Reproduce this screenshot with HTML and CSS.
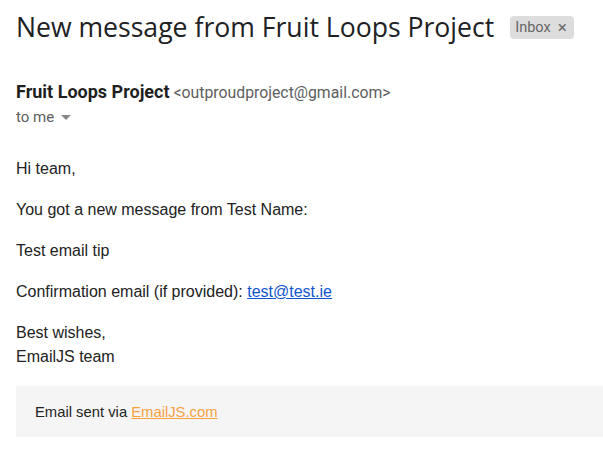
FILE: index.html
```html
<!DOCTYPE html>
<html>
<head>
<meta charset="utf-8">
<link rel="stylesheet" href="styles.css">
</head>
<body>
<div class="page">
  <div class="subject-row">
    <h1 class="subject">New message from Fruit Loops Project</h1>
    <span class="label">Inbox <span class="label-x">×</span></span>
  </div>
  <div class="sender">
    <div class="from"><span class="name">Fruit Loops Project</span> <span class="addr">&lt;outproudproject@gmail.com&gt;</span></div>
    <div class="to">to me <span class="caret"></span></div>
  </div>
  <div class="body">
    <p>Hi team,</p>
    <p>You got a new message from Test Name:</p>
    <p>Test email tip</p>
    <p>Confirmation email (if provided): <a class="mail" href="#">test@test.ie</a></p>
    <p>Best wishes,<br>EmailJS team</p>
  </div>
  <div class="footer">Email sent via <a class="ejs" href="#">EmailJS.com</a></div>
</div>
</body>
</html>
```
FILE: styles.css
```css
html, body { margin: 0; padding: 0; background: #fff; }
.page { padding: 0 0 0 16px; }
.subject-row { display: flex; align-items: center; padding-top: 9px; height: 36px; }
.subject { margin: 0; font-family: "Open Sans", sans-serif; font-weight: 400; font-size: 26.6px; color: #202124; line-height: 36px; }
.label { margin-left: 16px; background: #dddddd; color: #666; font-family: Roboto, sans-serif; font-size: 14.5px; border-radius: 4px; padding: 0 7px 0 5px; height: 23px; display: inline-flex; align-items: center; gap: 7px; }
.label-x { font-size: 17px; color: #6a6a6a; }
.sender { margin-top: 36px; font-family: Roboto, sans-serif; }
.from { font-size: 15.8px; line-height: 22px; display: flex; align-items: baseline; gap: 4px; }
.name { font-weight: 700; color: #1f1f1f; font-size: 18px; }
.addr { font-size: 15.8px; color: #5e5e5e; }
.to { font-size: 15px; color: #5e5e5e; line-height: 22px; margin-top: 2px; display: flex; align-items: center; gap: 7px; }
.caret { width: 0; height: 0; border-left: 5px solid transparent; border-right: 5px solid transparent; border-top: 5px solid #888; margin-top: 1px; }
.body { font-family: "Liberation Sans", Arial, sans-serif; font-size: 16px; color: #222; margin-top: 29px; }
.body p { margin: 0 0 17px; line-height: 24px; }
.mail { color: #1155cc; }
.footer { background: #f5f5f5; font-family: "Liberation Sans", Arial, sans-serif; font-size: 14.8px; color: #222; padding: 17px 19px 16px; margin-top: 17px; line-height: 18px; }
.ejs { color: #f7a042; }
```
